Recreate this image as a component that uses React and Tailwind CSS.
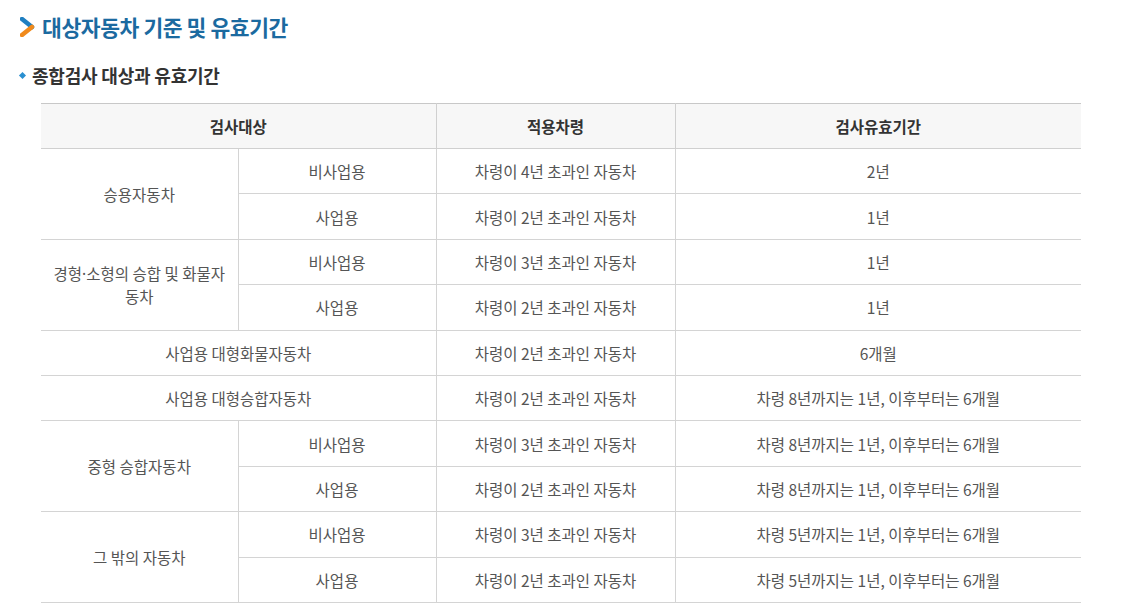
const rows = [
  { group: '승용자동차', span: 2, use: '비사업용', age: '차령이 4년 초과인 자동차', period: '2년' },
  { use: '사업용', age: '차령이 2년 초과인 자동차', period: '1년' },
  { group: <>경형<span className="font-['Noto_Sans']">·</span>소형의 승합 및 화물자동차</>, span: 2, use: '비사업용', age: '차령이 3년 초과인 자동차', period: '1년' },
  { use: '사업용', age: '차령이 2년 초과인 자동차', period: '1년' },
  { full: '사업용 대형화물자동차', age: '차령이 2년 초과인 자동차', period: '6개월' },
  { full: '사업용 대형승합자동차', age: '차령이 2년 초과인 자동차', period: '차령 8년까지는 1년, 이후부터는 6개월' },
  { group: '중형 승합자동차', span: 2, use: '비사업용', age: '차령이 3년 초과인 자동차', period: '차령 8년까지는 1년, 이후부터는 6개월' },
  { use: '사업용', age: '차령이 2년 초과인 자동차', period: '차령 8년까지는 1년, 이후부터는 6개월' },
  { group: '그 밖의 자동차', span: 2, use: '비사업용', age: '차령이 3년 초과인 자동차', period: '차령 5년까지는 1년, 이후부터는 6개월' },
  { use: '사업용', age: '차령이 2년 초과인 자동차', period: '차령 5년까지는 1년, 이후부터는 6개월' },
]

const td = 'border border-[#d4d4d4] h-[45.4px] px-3 text-center align-middle'

export default function App() {
  return (
    <div className="bg-white w-[1125px] h-[616px] overflow-hidden text-[#555] font-['Noto_Sans_CJK_KR','Noto_Sans',sans-serif]">
      {/* page title */}
      <div className="flex items-center gap-[7px] pl-[20px] pt-[13px]">
        <svg width="15" height="20" viewBox="0 0 15 20">
          <path d="M2 2 L12 10" stroke="#1f7fc1" strokeWidth="4.5" strokeLinecap="round" />
          <path d="M12 10 L2 18" stroke="#f08a1c" strokeWidth="4.5" strokeLinecap="round" />
        </svg>
        <h2 className="text-[21.5px] font-bold text-[#1b6aa0] leading-[28px] tracking-[-0.4px]">대상자동차 기준 및 유효기간</h2>
      </div>

      {/* sub title */}
      <div className="flex items-center gap-[7px] pl-[20px] mt-[22px]">
        <span className="w-[5px] h-[5px] bg-[#2a8fd0] rotate-45 inline-block" />
        <h3 className="text-[18px] font-bold text-[#333] leading-[24px] tracking-[-0.2px]">종합검사 대상과 유효기간</h3>
      </div>

      {/* table */}
      <div className="pl-[41px] mt-[16px]">
        <table className="w-[1040px] border-collapse table-fixed text-[15.5px] leading-[22px] [&_td:first-child]:border-l-0 [&_th:first-child]:border-l-0 [&_td:last-child]:border-r-0 [&_th:last-child]:border-r-0">
          <colgroup>
            <col className="w-[197px]" />
            <col className="w-[198px]" />
            <col className="w-[239px]" />
            <col />
          </colgroup>
          <thead>
            <tr className="bg-[#f7f7f7]">
              <th colSpan={2} className="border border-[#d0d0d0] h-[45px] font-bold text-[#333] border-t-[#c8c8c8]">검사대상</th>
              <th className="border border-[#d0d0d0] h-[45px] font-bold text-[#333] border-t-[#c8c8c8]">적용차령</th>
              <th className="border border-[#d0d0d0] h-[45px] font-bold text-[#333] border-t-[#c8c8c8]">검사유효기간</th>
            </tr>
          </thead>
          <tbody>
            {rows.map((r, i) => (
              <tr key={i}>
                {r.full && <td colSpan={2} className={td}>{r.full}</td>}
                {r.group && <td rowSpan={r.span} className={`${td} px-[9px]`}>{r.group}</td>}
                {r.use && <td className={td}>{r.use}</td>}
                <td className={td}>{r.age}</td>
                <td className={td}>{r.period}</td>
              </tr>
            ))}
          </tbody>
        </table>
      </div>
    </div>
  )
}
